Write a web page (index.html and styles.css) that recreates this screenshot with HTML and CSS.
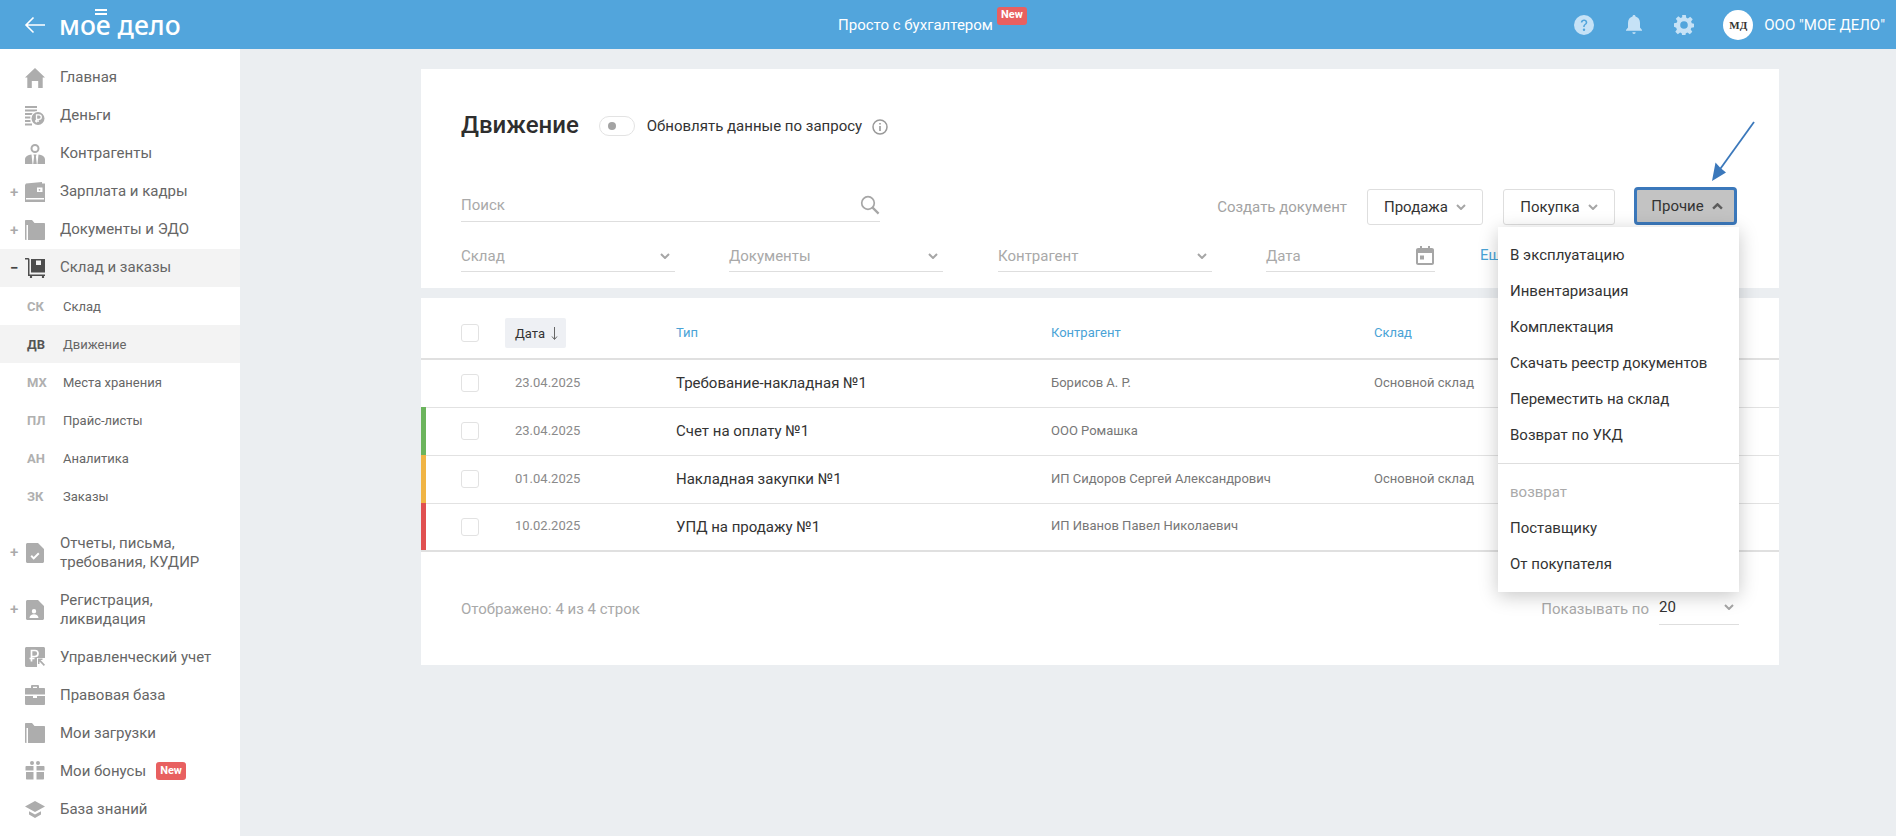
FILE: index.html
```html
<!DOCTYPE html>
<html lang="ru">
<head>
<meta charset="utf-8">
<title>Движение</title>
<link rel="stylesheet" href="styles.css">
</head>
<body>
<header class="topbar">
  <div class="brand">
    <svg class="back" viewBox="0 0 22 18" width="22" height="18"><path d="M21 9H2M9.5 1.5 2 9l7.5 7.5" fill="none" stroke="#fff" stroke-width="1.6"/></svg>
    <span class="logo">мое дело<i class="logo-bars"></i></span>
  </div>
  <div class="promo"><span>Просто с бухгалтером</span><b class="badge promo-badge">New</b></div>
  <div class="tools">
    <svg class="tool" viewBox="0 0 20 20" width="20" height="20"><circle cx="10" cy="10" r="10" fill="#c6e2f6"/><path d="M6.8 7.6c0-2 1.5-3.1 3.3-3.1s3.2 1.1 3.2 2.8c0 2.400-2.600 2.300-2.600 4.600H9.200c0-3 2.500-3 2.500-4.500 0-.8-.7-1.400-1.600-1.400s-1.700.6-1.700 1.600z" fill="#52a5dc"/><circle cx="10" cy="14.700" r="1.200" fill="#52a5dc"/></svg>
    <svg class="tool" viewBox="0 0 20 20" width="20" height="20"><path d="M10 0c1 0 1.500.7 1.500 1.500C14.500 2.300 16 4.800 16 8v4.500l2 2.500v.8H2V15l2-2.500V8c0-3.200 1.500-5.700 4.500-6.500C8.500.7 9 0 10 0z" fill="#c6e2f6"/><path d="M8.300 17.300h3.400a1.700 1.700 0 0 1-3.400 0z" fill="#c6e2f6"/></svg>
    <svg class="tool tool-last" viewBox="0 0 20 20" width="20" height="20"><path fill-rule="evenodd" d="M8.200 0h3.600l.5 2.700 1.600.7 2.300-1.600 2.500 2.500-1.600 2.300.7 1.600 2.200.5v3.600l-2.700.5-.6 1.600 1.600 2.300-2.500 2.500-2.300-1.600-1.700.7-.5 2.700H8.200l-.5-2.700-1.600-.7-2.300 1.600-2.500-2.500 1.600-2.300-.7-1.600L0 11.800V8.200l2.700-.5.7-1.600-1.600-2.300 2.500-2.500 2.300 1.600 1.600-.7zM10 6.200a3.800 3.800 0 1 0 0 7.600 3.800 3.800 0 0 0 0-7.600z" fill="#c6e2f6"/></svg>
    <span class="avatar">МД</span>
    <span class="company">ООО "МОЕ ДЕЛО"</span>
  </div>
</header>

<div class="shell">
  <nav class="sidebar">
    <a class="nav-item"><span class="nav-mark"></span>
      <svg class="nav-icon" viewBox="0 0 20 20"><path d="M10 0 20 9.500h-2.300V20h-4.500v-7H6.800v7H2.300V9.500H0z"/></svg>
      <span class="nav-label">Главная</span></a>
    <a class="nav-item"><span class="nav-mark"></span>
      <svg class="nav-icon" viewBox="0 0 20 20"><path d="M0 0h12v2H0zM0 3.500h12v2H0zM0 7h8v2H0zM0 10.500h5.500v2H0zM0 14h5.500v2H0zM0 17.500h7v2H0z"/><circle cx="13" cy="12.500" r="7.500" fill="#fff"/><circle cx="13" cy="12.500" r="6.500"/><path d="M11.500 16.500V8.800h2.500a2.300 2.300 0 0 1 0 4.600h-2.500M10 15h4" fill="none" stroke="#fff" stroke-width="1.300"/></svg>
      <span class="nav-label">Деньги</span></a>
    <a class="nav-item"><span class="nav-mark"></span>
      <svg class="nav-icon" viewBox="0 0 20 20"><path fill-rule="evenodd" d="M10 0a4.500 4.500 0 1 1 0 9 4.500 4.500 0 0 1 0-9zm0 2a2.500 2.500 0 1 0 0 5 2.500 2.500 0 0 0 0-5z"/><path d="M0 20v-4.500C0 12.500 3 11 6.500 10.500l1 9.500zM20 20v-4.500c0-3-3-4.500-6.500-5l-1 9.500zM8.500 10.500h3l-.6 2 .9 7.500H8.200l.9-7.500z"/></svg>
      <span class="nav-label">Контрагенты</span></a>
    <a class="nav-item"><span class="nav-mark">+</span>
      <svg class="nav-icon" viewBox="0 0 20 20"><path fill-rule="evenodd" d="M1 1.500 17 0v1.500h3V20H0V3zm0 14.500v1.500h18V16zM12 5.500v4.500h5.500V5.500zm2.500 1.400a.9.900 0 1 1 0 1.800.9.900 0 0 1 0-1.800z"/></svg>
      <span class="nav-label">Зарплата и кадры</span></a>
    <a class="nav-item"><span class="nav-mark">+</span>
      <svg class="nav-icon" viewBox="0 0 20 20"><path d="M0 1c0-.6.400-1 1-1h6l2.500 3H19c.6 0 1 .4 1 1v15c0 .6-.4 1-1 1H3V5h-1.500v15H1c-.6 0-1-.4-1-1z"/></svg>
      <span class="nav-label">Документы и ЭДО</span></a>
    <a class="nav-item is-open"><span class="nav-mark">−</span>
      <svg class="nav-icon" viewBox="0 0 20 20"><path d="M0 0h3.500l1 1v15.500H20V18H3V1.500H0z"/><path fill-rule="evenodd" d="M6 1h14v13.500H6zm5 1.500V7h5V2.500z"/><circle cx="6" cy="19" r="1.200"/><circle cx="18" cy="19" r="1.200"/></svg>
      <span class="nav-label">Склад и заказы</span></a>

    <div class="subnav">
      <a class="sub-item"><b>СК</b><span>Склад</span></a>
      <a class="sub-item is-current"><b>ДВ</b><span>Движение</span></a>
      <a class="sub-item"><b>МХ</b><span>Места хранения</span></a>
      <a class="sub-item"><b>ПЛ</b><span>Прайс-листы</span></a>
      <a class="sub-item"><b>АН</b><span>Аналитика</span></a>
      <a class="sub-item"><b>ЗК</b><span>Заказы</span></a>
    </div>

    <a class="nav-item nav-tall"><span class="nav-mark">+</span>
      <svg class="nav-icon" viewBox="0 0 20 20"><path fill-rule="evenodd" d="M1 1.500C1 .7 1.700 0 2.500 0H13l6 6v12.500c0 .8-.7 1.500-1.500 1.500h-15C1.700 20 1 19.300 1 18.500zM5.500 13.500l3.200 3.200 5.800-5.800-1.400-1.400-4.400 4.400-1.800-1.800z"/></svg>
      <span>Отчеты, письма,<br>требования, КУДИР</span></a>
    <a class="nav-item nav-tall"><span class="nav-mark">+</span>
      <svg class="nav-icon" viewBox="0 0 20 20"><path fill-rule="evenodd" d="M1 1.500C1 .7 1.700 0 2.500 0H13l6 6v12.500c0 .8-.7 1.500-1.500 1.500h-15C1.700 20 1 19.300 1 18.500zM9 9a2.200 2.200 0 1 0 0 4.400A2.200 2.200 0 0 0 9 9zM4.500 18h9c0-2.500-2-3.800-4.500-3.800S4.500 15.500 4.500 18z"/></svg>
      <span>Регистрация,<br>ликвидация</span></a>
    <a class="nav-item"><span class="nav-mark"></span>
      <svg class="nav-icon" viewBox="0 0 20 20"><path d="M1.500 0h17c.8 0 1.500.7 1.500 1.500V11h-8v9H1.500C.7 20 0 19.300 0 18.500v-17C0 .7.700 0 1.500 0z"/><path d="M6.500 14.500V3.500h3.500a3 3 0 0 1 0 6H6.500M4.500 11.500h5" fill="none" stroke="#fff" stroke-width="1.700"/><path d="M13 11.500h4.500V13h-2l4.500 4.800-1.200 1.200-4.300-4.600V17H13z"/></svg>
      <span>Управленческий учет</span></a>
    <a class="nav-item"><span class="nav-mark"></span>
      <svg class="nav-icon" viewBox="0 0 20 20"><path d="M6 3V1.200C6 .5 6.500 0 7.200 0h5.600c.7 0 1.200.5 1.200 1.200V3h5c.6 0 1 .4 1 1v5.500H0V4c0-.6.400-1 1-1zm2-1.200V3h4V1.800zM0 11h8v2h4v-2h8v-.001 8c0 .6-.5 1-1 1H1.500c-.8 0-1.500-.5-1.500-1z"/></svg>
      <span>Правовая база</span></a>
    <a class="nav-item"><span class="nav-mark"></span>
      <svg class="nav-icon" viewBox="0 0 20 20"><path d="M0 1c0-.6.400-1 1-1h6l2.500 3H19c.6 0 1 .4 1 1v15c0 .6-.4 1-1 1H3V5h-1.500v15H1c-.6 0-1-.4-1-1z"/></svg>
      <span>Мои загрузки</span></a>
    <a class="nav-item"><span class="nav-mark"></span>
      <svg class="nav-icon" viewBox="0 0 20 20"><circle cx="7" cy="2" r="2"/><circle cx="13" cy="2" r="2"/><path d="M1.500 5h7v4.500h-8V6c0-.6.400-1 1-1zM11.500 5h7c.6 0 1 .4 1 1v3.500h-8zM1 11h7.500v7.500H2c-.6 0-1-.4-1-1zM11.500 11H19v6.500c0 .6-.4 1-1 1h-6.500z"/></svg>
      <span>Мои бонусы</span><b class="badge nav-badge">New</b></a>
    <a class="nav-item"><span class="nav-mark"></span>
      <svg class="nav-icon" viewBox="0 0 20 20"><path d="M10 2 20 7.500 10 13 0 7.500zM4 12.200l6 3.300 6-3.300v3.300L10 19l-6-3.500z"/></svg>
      <span>База знаний</span></a>
  </nav>

  <main class="content">
    <section class="card filters">
      <div class="title-row">
        <h1>Движение</h1>
        <span class="toggle"><i></i></span>
        <span class="toggle-label">Обновлять данные по запросу</span>
        <svg class="info" viewBox="0 0 16 16" width="16" height="16"><circle cx="8" cy="8" r="7" fill="none" stroke="#999" stroke-width="1.500"/><path d="M7.200 7h1.600v5H7.200zM7.200 4h1.600v1.600H7.200z" fill="#999"/></svg>
      </div>

      <div class="search-row">
        <label class="field search"><span>Поиск</span>
          <svg viewBox="0 0 20 20" width="20" height="20"><circle cx="8" cy="8" r="6.300" fill="none" stroke="#a6a6a6" stroke-width="1.700"/><path d="m12.600 12.600 6 6" stroke="#a6a6a6" stroke-width="2.200"/></svg>
        </label>
        <div class="create">
          <span class="create-label">Создать документ</span>
          <button class="btn btn-sale">Продажа <svg class="chev" viewBox="0 0 10 6"><path d="m1 1 4 4 4-4"/></svg></button>
          <button class="btn btn-buy">Покупка <svg class="chev" viewBox="0 0 10 6"><path d="m1 1 4 4 4-4"/></svg></button>
          <div class="other">
            <button class="btn btn-other">Прочие <svg class="chev" viewBox="0 0 10 6"><path d="m1 5 4-4 4 4"/></svg></button>
            <svg class="pointer" viewBox="0 0 44 62" width="44" height="62"><path d="M43 1 7 51" stroke="#3b78bb" stroke-width="1.800" fill="none"/><path d="M1 60 4.500 41.500 9.500 47 15 51.500z" fill="#3b78bb"/></svg>
            <div class="menu">
              <a>В эксплуатацию</a>
              <a>Инвентаризация</a>
              <a>Комплектация</a>
              <a>Скачать реестр документов</a>
              <a>Переместить на склад</a>
              <a>Возврат по УКД</a>
              <hr>
              <span class="menu-head">возврат</span>
              <a>Поставщику</a>
              <a>От покупателя</a>
            </div>
          </div>
        </div>
      </div>

      <div class="filter-row">
        <label class="field select"><span>Склад</span><svg class="chev" viewBox="0 0 10 6"><path d="m1 1 4 4 4-4"/></svg></label>
        <label class="field select select-mid"><span>Документы</span><svg class="chev" viewBox="0 0 10 6"><path d="m1 1 4 4 4-4"/></svg></label>
        <label class="field select"><span>Контрагент</span><svg class="chev" viewBox="0 0 10 6"><path d="m1 1 4 4 4-4"/></svg></label>
        <label class="field date"><span>Дата</span>
          <svg viewBox="0 0 18 19" width="18" height="19"><path fill-rule="evenodd" d="M4 0h2v2h6V0h2v2h2c1 0 2 .9 2 2v13c0 1-1 2-2 2H2c-1 0-2-1-2-2V4c0-1.100 1-2 2-2h2zM2 7v10h14V7zm2 2.500h4v4H4z" fill="#a6a6a6"/></svg>
        </label>
        <a class="more">Еще</a>
      </div>
    </section>

    <section class="card results">
      <div class="grid head">
        <i class="check"></i>
        <span class="sort">Дата <svg viewBox="0 0 7 13" width="7" height="13"><path d="M3.500 0v12M1 9.500l2.500 3 2.500-3" fill="none" stroke="#666" stroke-width="1"/></svg></span>
        <span class="head-label">Тип</span>
        <span class="head-label">Контрагент</span>
        <span class="head-label">Склад</span>
      </div>
      <div class="rows">
        <div class="grid row">
          <i class="check"></i><span class="cell-date">23.04.2025</span><span class="cell-type">Требование-накладная №1</span><span class="cell-small">Борисов А. Р.</span><span class="cell-small">Основной склад</span>
        </div>
        <div class="grid row row-green">
          <i class="check"></i><span class="cell-date">23.04.2025</span><span class="cell-type">Счет на оплату №1</span><span class="cell-small">ООО Ромашка</span><span class="cell-small"></span>
        </div>
        <div class="grid row row-yellow">
          <i class="check"></i><span class="cell-date">01.04.2025</span><span class="cell-type">Накладная закупки №1</span><span class="cell-small">ИП Сидоров Сергей Александрович</span><span class="cell-small">Основной склад</span>
        </div>
        <div class="grid row row-red row-last">
          <i class="check"></i><span class="cell-date">10.02.2025</span><span class="cell-type">УПД на продажу №1</span><span class="cell-small">ИП Иванов Павел Николаевич</span><span class="cell-small"></span>
        </div>
      </div>
      <div class="foot">
        <span class="count">Отображено: 4 из 4 строк</span>
        <div class="page-size">
          <span class="count">Показывать по</span>
          <label class="size-select"><span>20</span><svg class="chev" viewBox="0 0 10 6"><path d="m1 1 4 4 4-4"/></svg></label>
        </div>
      </div>
    </section>
  </main>
</div>
</body>
</html>
```
FILE: styles.css
```css
* { box-sizing: border-box; }
html, body { height: 100%; }
body {
  margin: 0;
  overflow: hidden;
  background: #ebeef1;
  color: #333;
  font-family: Roboto, "Liberation Sans", sans-serif;
  font-size: 15px;
}
a { text-decoration: none; color: inherit; }
i { font-style: normal; }

/* top bar */
.topbar {
  position: relative;
  height: 49px;
  background: #52a5dc;
  color: #fff;
  display: flex;
  align-items: center;
  justify-content: space-between;
  padding: 0 11px 0 24px;
}
.brand { display: flex; align-items: center; gap: 13px; width: 268px; }
.back { display: block; }
.logo {
  position: relative;
  font-family: "Noto Sans", sans-serif;
  font-weight: 500;
  font-size: 26.500px;
  line-height: 36px;
  white-space: nowrap;
}
.logo-bars {
  position: absolute;
  left: 36px;
  top: 2px;
  width: 12px;
  height: 6px;
  border-top: 2px solid #fff;
  border-bottom: 2px solid #fff;
}
.promo { display: flex; align-items: flex-start; gap: 4px; padding-top: 1px; }
.promo > span { line-height: 49px; }
.badge {
  display: inline-block;
  background: #e86060;
  color: #fff;
  border-radius: 3px;
  font-size: 11px;
  font-weight: 700;
  text-align: center;
}
.promo-badge { width: 30px; height: 18px; line-height: 16px; margin-top: 6px; }
.tools { display: flex; align-items: center; width: 312px; justify-content: flex-end; }
.tool { display: block; margin-right: 30px; }
.tool-last { margin-right: 29px; }
.avatar {
  width: 30px;
  height: 30px;
  border-radius: 50%;
  background: #fff;
  color: #333;
  font-family: "Liberation Serif", serif;
  font-weight: 700;
  font-size: 11px;
  line-height: 30px;
  text-align: center;
  margin-right: 11px;
}
.company { white-space: nowrap; font-size: 15px; }

/* sidebar */
.shell { display: flex; height: 787px; }
.sidebar {
  flex: none;
  width: 240px;
  background: #fff;
  color: #666;
  line-height: 19px;
  padding-top: 10px;
}
.nav-item {
  display: flex;
  align-items: center;
  height: 38px;
  padding-left: 10px;
}
.nav-label { padding-bottom: 2px; }
.nav-tall { height: 57px; }
.nav-mark {
  flex: none;
  width: 15px;
  font-size: 15px;
  font-weight: 500;
  color: #aaa;
}
.nav-icon {
  flex: none;
  width: 20px;
  height: 20px;
  margin-right: 15px;
  fill: #adadad;
}
.is-open { background: #f3f3f3; }
.is-open .nav-mark { color: #444; font-weight: 700; }
.is-open .nav-icon { fill: #4d4d4d; }
.nav-badge {
  width: 30px;
  height: 18px;
  line-height: 17px;
  margin-left: 10px;
}
.subnav { margin-bottom: 9px; }
.sub-item {
  display: flex;
  align-items: center;
  height: 38px;
  padding-left: 27px;
  font-size: 13px;
}
.sub-item b { width: 36px; color: #b0b0b0; font-weight: 700; font-size: 13px; }
.is-current { background: #f3f3f3; }
.is-current b { color: #555; }

/* content */
.content { flex: 1; padding: 20px 117px 0 181px; min-width: 0; }
.card { background: #fff; }
.filters { height: 219px; padding: 0 40px; }
.title-row { display: flex; align-items: center; height: 112px; }
h1 {
  margin: 0 20px 0 0;
  font-size: 24px;
  font-weight: 500;
  color: #2e2e2e;
  line-height: 32px;
}
.toggle {
  width: 36px;
  height: 20px;
  border: 1px solid #e3e3e3;
  border-radius: 10px;
  margin: 2px 12px 0 0;
  padding: 5px 0 0 8px;
}
.toggle i { display: block; width: 8px; height: 8px; border-radius: 50%; background: #a3a3a3; }
.toggle-label { color: #333; margin: 2px 10px 0 0; }
.info { margin-top: 3px; }

.field {
  display: flex;
  align-items: center;
  justify-content: space-between;
  border-bottom: 1px solid #dedede;
  color: #a9a9a9;
  height: 32px;
}
.search-row { display: flex; justify-content: space-between; align-items: flex-start; height: 51px; margin-top: 8px; }
.search { width: 419px; height: 33px; padding-bottom: 1px; }
.create { display: flex; align-items: flex-start; color: #333; }
.create-label { color: #a3a3a3; line-height: 36px; margin-right: 20px; }
.btn {
  display: flex;
  align-items: center;
  justify-content: center;
  gap: 8px;
  height: 36px;
  background: #fff;
  border: 1px solid #dedede;
  border-radius: 3px;
  color: #333;
  font: inherit;
  padding: 0;
}
.btn-sale { width: 116px; margin-right: 20px; }
.btn-buy { width: 112px; margin-right: 19px; }
.other { position: relative; width: 105px; }
.btn-other {
  width: 103px;
  height: 38px;
  margin-top: -2px;
  padding-left: 3px;
  background: #c3c3c3;
  border: 3px solid #3b78bb;
  border-radius: 4px;
}
.chev { display: block; width: 10px; height: 6px; fill: none; stroke: #a6a6a6; stroke-width: 2; flex: none; }
.btn-other .chev { width: 11px; height: 7px; stroke: #5c5c5c; stroke-width: 2.200; }
.pointer { position: absolute; left: 77px; top: -68px; }
.menu {
  position: absolute;
  top: 38px;
  right: 0;
  width: 241px;
  height: 365px;
  padding-top: 10px;
  background: #fff;
  box-shadow: 0 4px 18px rgba(0,0,0,.22);
  z-index: 2;
}
.menu a { display: block; height: 36px; line-height: 36px; padding-left: 12px; color: #333; }
.menu hr { border: 0; border-top: 1px solid #dedede; margin: 10px 0 0; }
.menu-head { display: block; height: 46px; line-height: 56px; padding-left: 12px; color: #aaa; }

.filter-row { display: flex; align-items: flex-start; height: 32px; }
.select { width: 214px; margin-right: 54px; padding-right: 5px; }
.select-mid { margin-right: 55px; }
.filter-row .field > span { padding-top: 1px; }
.date { width: 169px; margin-right: 45px; padding-right: 1px; }
.more { color: #4aa3d6; line-height: 30px; }

/* table */
.results { margin-top: 10px; height: 367px; }
.grid {
  display: grid;
  grid-template-columns: 44px 171px 375px 323px 1fr;
  align-items: center;
  padding-left: 40px;
}
.head {
  height: 62px;
  padding-top: 10px;
  border-bottom: 2px solid #e0e0e0;
  font-size: 13px;
  color: #4aa3d6;
}
.head-label { padding-bottom: 2px; }
.check {
  display: block;
  width: 18px;
  height: 18px;
  border: 1px solid #e2e2e2;
  border-radius: 3px;
  background: #fff;
}
.sort {
  display: inline-flex;
  align-items: center;
  gap: 6px;
  width: 61px;
  height: 30px;
  padding-left: 10px;
  background: #eef0f4;
  border-radius: 2px;
  color: #333;
}
.row {
  position: relative;
  height: 48px;
  padding-bottom: 1px;
  border-bottom: 1px solid #e2e2e2;
}
.row-last { border-bottom: 2px solid #e0e0e0; }
.row::before {
  content: "";
  position: absolute;
  left: 0;
  top: -1px;
  bottom: 0;
  width: 5px;
}
.row-green::before { background: #6bb45c; }
.row-yellow::before { background: #f0b444; }
.row-red::before { background: #e05050; }
.cell-date { padding: 0 0 2px 10px; font-size: 13px; color: #8a8a8a; }
.cell-type { color: #333; font-size: 15px; }
.cell-small { padding-bottom: 2px; color: #777; font-size: 13px; }
.foot {
  display: flex;
  justify-content: space-between;
  align-items: flex-start;
  padding: 41px 40px 0;
}
.count { color: #a9a9a9; font-size: 15px; line-height: 32px; }
.page-size { display: flex; align-items: flex-start; gap: 10px; }
.size-select {
  display: flex;
  align-items: center;
  justify-content: space-between;
  width: 80px;
  height: 32px;
  border-bottom: 1px solid #dedede;
  color: #333;
  padding: 0 5px 3px 0;
}
```
